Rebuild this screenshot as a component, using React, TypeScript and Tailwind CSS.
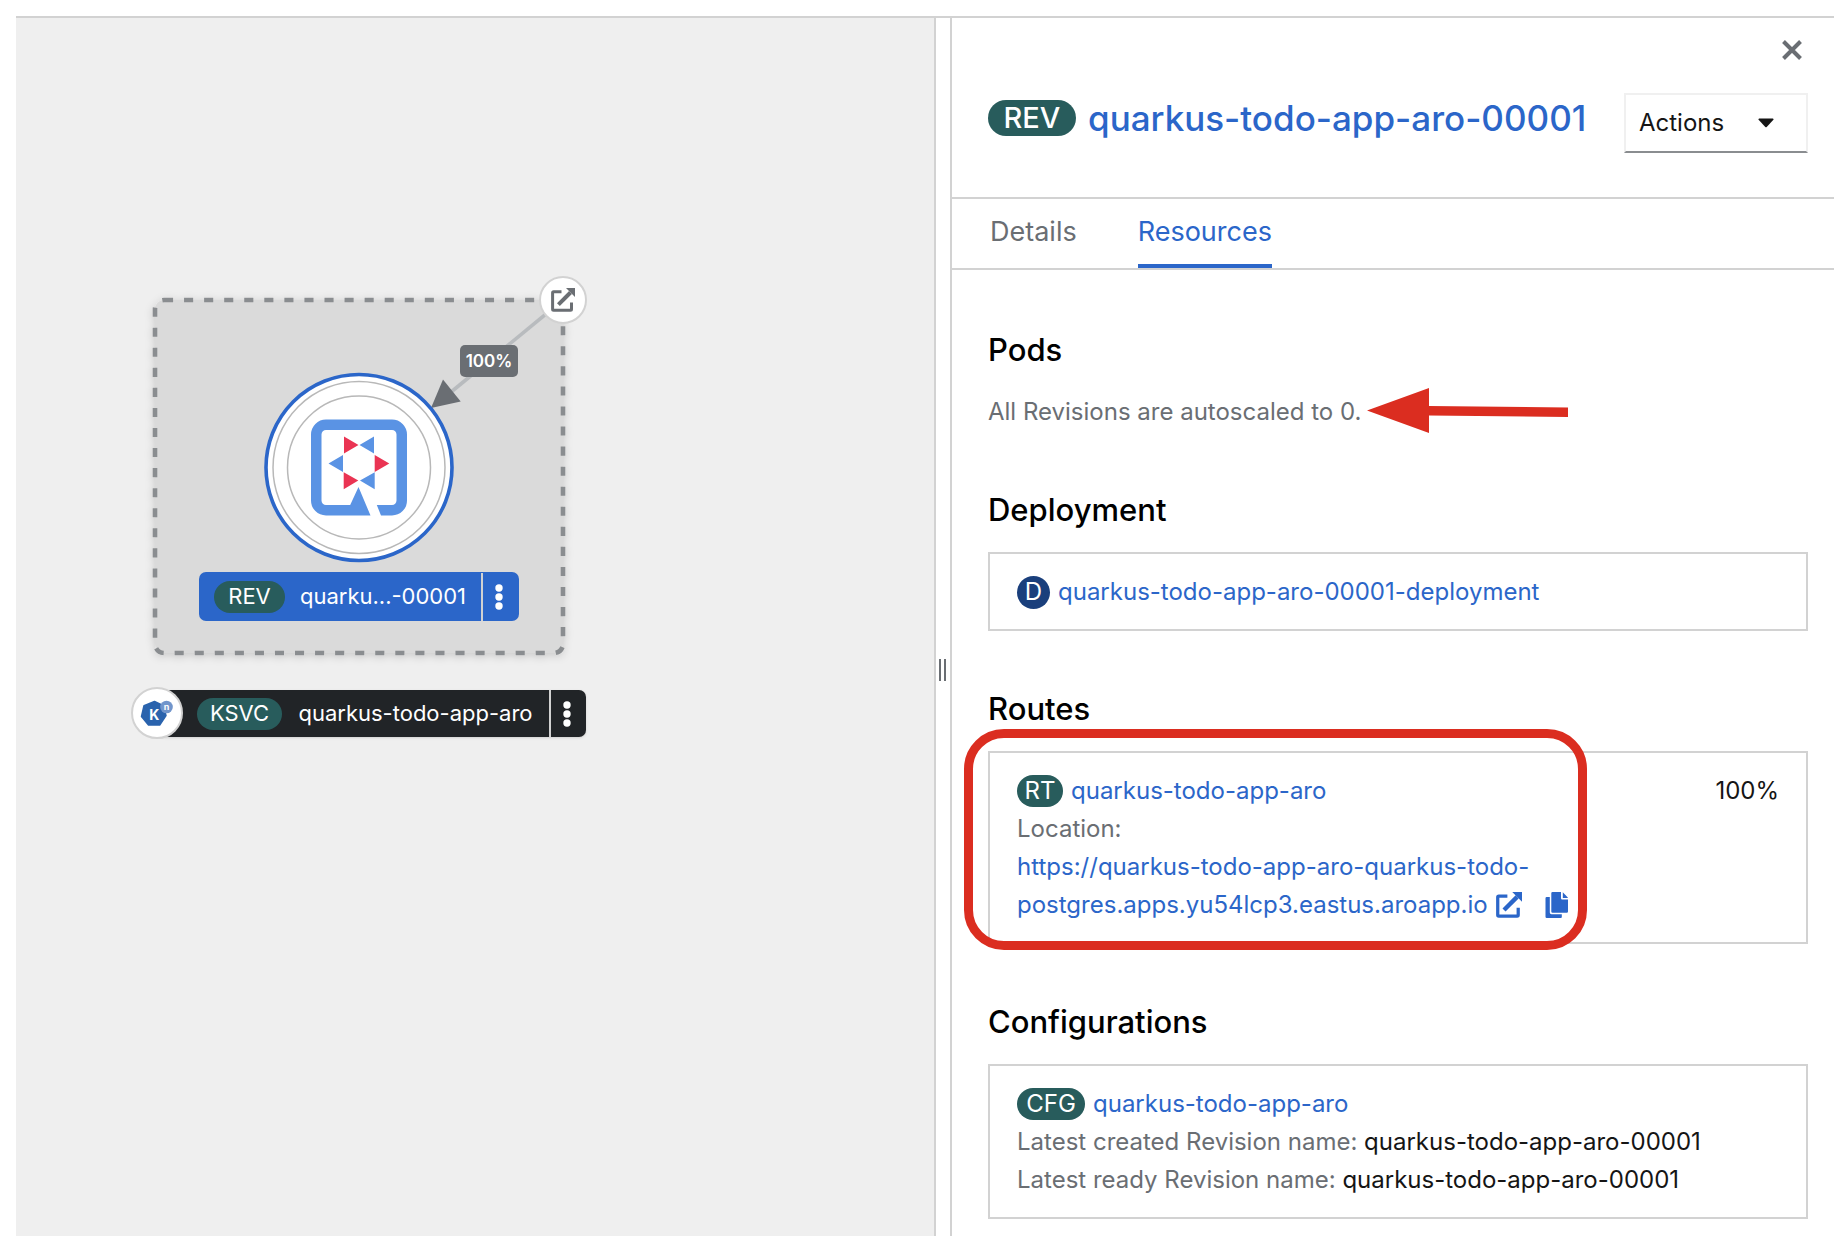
import type { ReactNode } from "react";

const LINK = "text-[#2b66c9] hover:underline";

function ExternalIcon({ className }: { className: string }) {
  return (
    <svg viewBox="0 0 24 24" className={className} fill="none" stroke="currentColor" aria-hidden="true">
      <path d="M10.5 3.8H2.6a1 1 0 0 0-1 1v16.4a1 1 0 0 0 1 1h16.9a1 1 0 0 0 1-1v-6.6" strokeWidth="3" />
      <path d="M7.4 16.6L19.5 4.5" strokeWidth="4" />
      <path d="M15 0h9v9z" fill="currentColor" stroke="none" />
    </svg>
  );
}

function CopyIcon() {
  return (
    <svg viewBox="0 0 24 26" className="h-[26px] w-6" fill="currentColor" aria-hidden="true">
      <path d="M7.5 0H16v6.2a1.3 1.3 0 0 0 1.3 1.3H23v12a1.2 1.2 0 0 1-1.2 1.2H7.5a1.2 1.2 0 0 1-1.2-1.2V1.2A1.2 1.2 0 0 1 7.5 0z" />
      <path d="M17.8.2L22.8 5.4V6h-5z" />
      <path d="M4.8 5v15.5a1.7 1.7 0 0 0 1.7 1.7h10.300v2.400A1.200 1.200 0 0 1 15.600 26H1.700A1.200 1.200 0 0 1 .5 24.800V6.200A1.200 1.200 0 0 1 1.700 5z" />
    </svg>
  );
}

function Kebab() {
  return (
    <svg viewBox="0 0 8 26" className="h-[26px] w-2" fill="white" aria-hidden="true">
      <circle cx="4" cy="4" r="3.7" />
      <circle cx="4" cy="13" r="3.7" />
      <circle cx="4" cy="22" r="3.7" />
    </svg>
  );
}

function Badge({ children, wide }: { children: string; wide: string }) {
  return (
    <span className={`mr-2 inline-flex h-8 shrink-0 items-center justify-center rounded-full bg-[#285c5c] text-white ${wide}`}>
      {children}
    </span>
  );
}

function GraphDrawing() {
  return (
    <svg viewBox="16 18 600 740" className="absolute top-0 left-0 h-[740px] w-[600px]" aria-hidden="true">
      <defs>
        <filter id="groupShadow" x="-10%" y="-10%" width="120%" height="120%">
          <feDropShadow dx="0" dy="2" stdDeviation="4" floodColor="#030303" floodOpacity="0.16" />
        </filter>
      </defs>
      <rect x="155" y="300" width="408" height="353" rx="9" fill="#dadada" stroke="#8a8d90" strokeWidth="4.600" strokeDasharray="9.100 10.960" filter="url(#groupShadow)" />
      <path d="M563 300L445 397" stroke="#b8bbbe" strokeWidth="3.600" />
      <path d="M431 408l12-28.500 17.700 22z" fill="#6a6e73" />
      <circle cx="359" cy="467.500" r="93" fill="white" stroke="#2b66c9" strokeWidth="3.600" />
      <circle cx="359" cy="467.500" r="86" fill="none" stroke="#b8b8b8" strokeWidth="1.500" />
      <circle cx="359" cy="467.500" r="71.500" fill="none" stroke="#b8b8b8" strokeWidth="1.500" />
      <g transform="translate(311 419.500)">
        <path
          fill="#5a93e4"
          d="M15 0h66a15 15 0 0 1 15 15v66a15 15 0 0 1-15 15H70l-4.200-10.500H81a4.500 4.500 0 0 0 4.500-4.500V15a4.500 4.500 0 0 0-4.500-4.500H15a4.500 4.500 0 0 0-4.500 4.500v66a4.500 4.500 0 0 0 4.500 4.500h24.200L47.500 67.500 59.500 96H15A15 15 0 0 1 0 81V15A15 15 0 0 1 15 0z"
        />
        <path fill="#5a93e4" d="M63 17v17l-14.500-8.500zM32 35.500v17l-14.500-8.500zM63.700 52.700v17L49 61z" />
        <path fill="#ea3453" d="M33 17v17l14.500-8.500zM63.700 35.500v17L78.300 44zM32.700 52.700v17L47.300 61z" />
      </g>
    </svg>
  );
}

function KnativeLogo() {
  return (
    <svg viewBox="0 0 34 28" className="h-7 w-[34px]" aria-hidden="true">
      <path d="M14.500 2.500l9 4.200 2.500 10-6.300 9.300H8.500L1.500 17.500 4 6.700z" fill="#2a63ad" stroke="#2a63ad" strokeWidth="1.500" strokeLinejoin="round" />
      <circle cx="26.500" cy="8" r="6.300" fill="#7195cb" />
      <text x="14.300" y="21" textAnchor="middle" fontSize="14" fontWeight="700" fill="white">K</text>
      <text x="26.500" y="10.500" textAnchor="middle" fontSize="9" fontWeight="700" fill="white">n</text>
    </svg>
  );
}

function Topology() {
  return (
    <section aria-label="Topology" className="relative overflow-hidden bg-[#efefef] text-[22px] text-white">
      <GraphDrawing />
      <a href="#open" aria-label="Open URL" className="absolute top-[258px] left-[523px] flex size-12 items-center justify-center rounded-full border-2 border-[#d2d2d2] bg-white text-[#6a6e73]">
        <ExternalIcon className="size-6" />
      </a>
      <span className="absolute top-[327px] left-[444px] flex h-8 w-[58px] items-center justify-center rounded-[5px] bg-[#6a6e73] text-[17px] font-semibold">
        100%
      </span>
      <div className="absolute top-[554px] left-[183px] flex h-[49px] w-[320px] items-center rounded-[7px] bg-[#2b66c9] pl-[15px]">
        <span className="flex h-8 w-[71px] items-center justify-center rounded-full bg-[#285c5c]">REV</span>
        <span className="flex-1 text-center">quarku...-00001</span>
        <button type="button" aria-label="Revision actions" className="flex h-12 w-[38px] items-center border-l-2 border-[#d2d2d2] pl-3">
          <Kebab />
        </button>
      </div>
      <div className="absolute top-[672px] left-[141px] flex h-[47px] w-[429px] items-center rounded-[7px] bg-[#212427] pl-10 shadow-sm">
        <span className="flex h-8 w-[85px] items-center justify-center rounded-full bg-[#285c5c]">KSVC</span>
        <span className="flex-1 text-center">quarkus-todo-app-aro</span>
        <button type="button" aria-label="Service actions" className="flex h-[47px] w-[37px] items-center border-l-2 border-[#d2d2d2] pl-3">
          <Kebab />
        </button>
      </div>
      <span className="absolute top-[669px] left-[115px] flex size-[52px] items-center justify-center rounded-full border-2 border-[#d2d2d2] bg-white">
        <KnativeLogo />
      </span>
    </section>
  );
}

function Section({ title, children }: { title: string; children: ReactNode }) {
  return (
    <section>
      <h2 className="mb-6 text-[31px] leading-9 font-medium text-black">{title}</h2>
      {children}
    </section>
  );
}

function Card({ children }: { children: ReactNode }) {
  return <div className="relative border-2 border-[#d2d2d2] px-[27px] pt-[19px] pb-[18px]">{children}</div>;
}

function SidePanel() {
  return (
    <aside className="min-w-0 bg-white">
      <header className="border-b-2 border-[#d2d2d2] pt-4 pr-[26px] pb-11 pl-9">
        <div className="flex justify-end">
          <button type="button" aria-label="Close" className="flex size-8 items-center justify-center text-[#6a6e73]">
            <svg viewBox="0 0 20 20" className="size-5" stroke="currentColor" strokeWidth="4" strokeLinecap="butt" aria-hidden="true">
              <path d="M1.500 1.500l17 17M18.500 1.500l-17 17" />
            </svg>
          </button>
        </div>
        <div className="mt-[27px] flex items-start justify-between">
          <h1 className="flex h-[50px] items-center text-[35px] leading-[48px] font-medium text-[#2b66c9]">
            <span className="mr-3 flex h-9 w-[88px] items-center justify-center rounded-full bg-[#285c5c] text-[29px] text-white">REV</span>
            <a href="#revision">quarkus-todo-app-aro-00001</a>
          </h1>
          <button type="button" className="flex h-[60px] w-[184px] items-center justify-between border-2 border-[#f0f0f0] border-b-[#8a8d90] pr-8 pl-[13px] text-[#151515]">
            Actions
            <svg viewBox="0 0 16 10" className="h-[10px] w-4" fill="currentColor" aria-hidden="true">
              <path d="M1.200.5h13.600a.8.800 0 0 1 .6 1.300L8.700 8.900a1 1 0 0 1-1.400 0L.6 1.800A.8.800 0 0 1 1.200.5z" />
            </svg>
          </button>
        </div>
      </header>
      <nav aria-label="Revision views" className="flex gap-[61px] border-b-2 border-[#d2d2d2] pl-[38px] text-[27px]">
        <button type="button" className="h-[69px] border-b-4 border-transparent text-[#6a6e73]">Details</button>
        <button type="button" aria-current="page" className="h-[69px] border-b-4 border-[#2b66c9] text-[#2b66c9]">Resources</button>
      </nav>
      <div className="flex flex-col gap-[60px] pt-[62px] pr-[26px] pl-9 leading-[38px]">
        <Section title="Pods">
          <p className="relative py-px text-[#6a6e73]">
            All Revisions are autoscaled to 0.
            <svg viewBox="0 0 202 46" className="absolute -top-1 left-[379px] h-[46px] w-[202px]" fill="#db2d20" aria-hidden="true">
              <path d="M0 22.500L62 0v18l139 1.500v9.500L62 27.500V45z" />
            </svg>
          </p>
        </Section>
        <Section title="Deployment">
          <Card>
            <div className="flex items-center">
              <span className="mr-2 flex size-[33px] items-center justify-center rounded-full bg-[#1a3f7c] text-white">D</span>
              <a href="#deployment" className={LINK}>quarkus-todo-app-aro-00001-deployment</a>
            </div>
          </Card>
        </Section>
        <Section title="Routes">
          <Card>
            <div className="flex justify-between">
              <div>
                <div className="flex items-center">
                  <Badge wide="w-[46px]">RT</Badge>
                  <a href="#route" className={LINK}>quarkus-todo-app-aro</a>
                </div>
                <p className="text-[#6a6e73]">Location:</p>
                <div className="flex items-end">
                  <a href="#location" className={LINK}>
                    https://quarkus-todo-app-aro-quarkus-todo-
                    <br />
                    <span className="flex items-center gap-2">
                      postgres.apps.yu54lcp3.eastus.aroapp.io
                      <ExternalIcon className="size-[26px]" />
                    </span>
                  </a>
                  <button type="button" aria-label="Copy to clipboard" className="ml-4 flex h-[38px] items-center text-[#2b66c9]">
                    <CopyIcon />
                  </button>
                </div>
              </div>
              <span className="text-[#151515]">100%</span>
            </div>
            <div className="pointer-events-none absolute -top-[24px] -left-[26px] h-[221px] w-[623px] rounded-[40px] border-[9px] border-[#db2d20]" />
          </Card>
        </Section>
        <Section title="Configurations">
          <Card>
            <div className="flex items-center">
              <Badge wide="w-[68px]">CFG</Badge>
              <a href="#configuration" className={LINK}>quarkus-todo-app-aro</a>
            </div>
            <p className="text-[#6a6e73]">
              Latest created Revision name: <span className="text-[#151515]">quarkus-todo-app-aro-00001</span>
            </p>
            <p className="text-[#6a6e73]">
              Latest ready Revision name: <span className="text-[#151515]">quarkus-todo-app-aro-00001</span>
            </p>
          </Card>
        </Section>
      </div>
    </aside>
  );
}

export default function App() {
  return (
    <div className="flex min-h-screen bg-white pt-4 pr-[14px] pl-4 font-['Inter',sans-serif] text-2xl">
      <main className="grid flex-1 grid-cols-[minmax(0,918fr)_18px_minmax(0,882fr)] border-t-2 border-[#d2d2d2]">
        <Topology />
        <div role="separator" aria-orientation="vertical" className="flex justify-center gap-[3px] border-x-2 border-[#d2d2d2] pt-[641px] pr-[2px]">
          <span className="h-[22px] w-[2px] bg-[#6a6e73]" />
          <span className="h-[22px] w-[2px] bg-[#6a6e73]" />
        </div>
        <SidePanel />
      </main>
    </div>
  );
}
